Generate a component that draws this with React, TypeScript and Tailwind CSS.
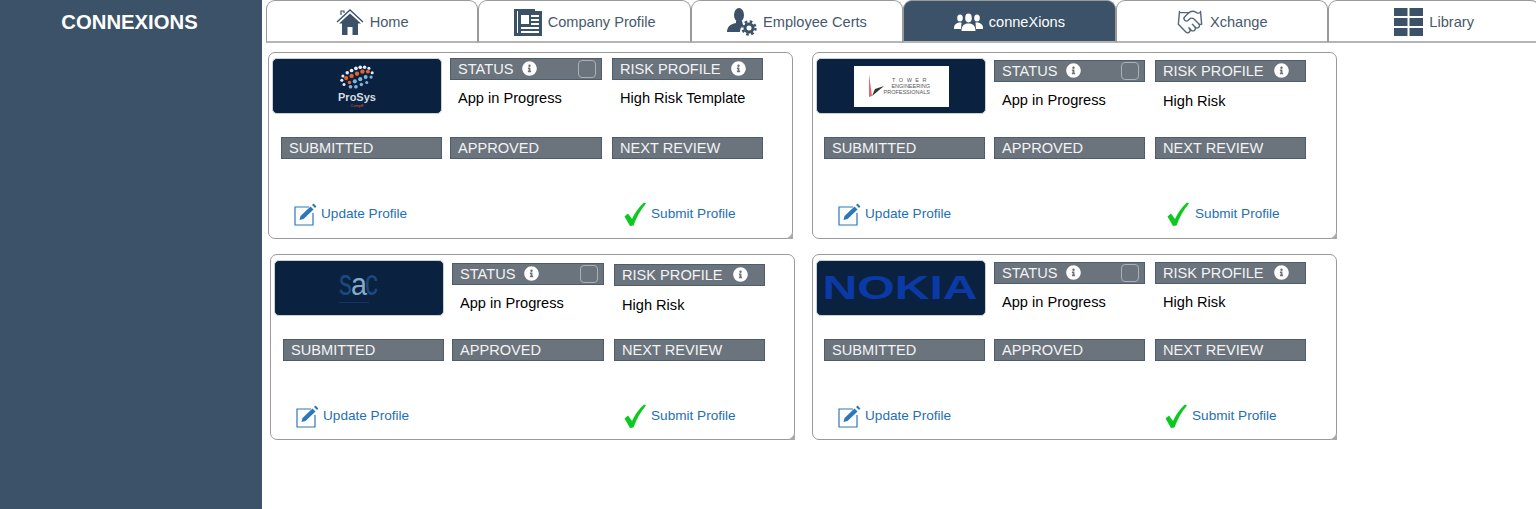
import type { ReactNode } from "react";
import { Handshake } from "lucide-react";
import { FaInfoCircle } from "react-icons/fa";

const FONT = "font-['Liberation_Sans',Arial,sans-serif]";

function HomeIcon() {
  return (
    <svg viewBox="0 0 28 28" className="h-[28px] w-[28px]">
      <path d="M1 14 L14 2 L27 14" fill="none" stroke="#3b5269" strokeWidth="1.3" />
      <path d="M5 7 V3 H8 V5" fill="none" stroke="#3b5269" strokeWidth="1.2" />
      <path
        d="M14 5.5 L3 15.5 H6 V27 H11.5 V19 H16.5 V27 H22 V15.5 H25 Z"
        fill="#3b5269"
      />
    </svg>
  );
}

function CompanyIcon() {
  return (
    <svg viewBox="0 0 28 28" className="h-[28px] w-[28px]">
      <path d="M0 1 H21 V3 H3 V25 H6 V28 H0 Z" fill="#3b5269" />
      <rect x="4" y="3" width="24" height="25" fill="#3b5269" />
      <rect x="7" y="7" width="8" height="9" fill="#fff" />
      <rect x="17" y="7" width="8" height="2" fill="#fff" />
      <rect x="17" y="11" width="8" height="2" fill="#fff" />
      <rect x="17" y="15" width="8" height="2" fill="#fff" />
      <rect x="7" y="19" width="18" height="2" fill="#fff" />
      <rect x="7" y="23" width="18" height="2" fill="#fff" />
    </svg>
  );
}

function CertsIcon() {
  return (
    <svg viewBox="0 0 30 28" className="h-[28px] w-[30px]" fill="#3b5269">
      <ellipse cx="12" cy="7" rx="5" ry="7" />
      <path d="M9 13 H15 L16 17 C14 19 13 21 13 24 H0 C0 19 3 16 9 15 Z" />
      <circle cx="22" cy="20" r="4" fill="none" stroke="#3b5269" strokeWidth="3" />
      <circle cx="22" cy="20" r="6.5" fill="none" stroke="#3b5269" strokeWidth="2.4" strokeDasharray="2.6 2.5" />
    </svg>
  );
}

function PeopleIcon() {
  return (
    <svg viewBox="0 0 29 18" className="h-[18px] w-[29px]" fill="#fff">
      <ellipse cx="6" cy="5" rx="2.8" ry="3.6" />
      <path d="M0 15 C0 11 3 10 5 9.5 L7.5 9.5 L7 16 H0 Z" />
      <ellipse cx="23" cy="5" rx="2.8" ry="3.6" />
      <path d="M29 15 C29 11 26 10 24 9.5 L21.5 9.5 L22 16 H29 Z" />
      <ellipse cx="14.5" cy="5" rx="3.3" ry="4.4" />
      <path d="M7.5 18 C7.5 13 10 11 13 10.5 H16 C19 11 21.5 13 21.5 18 Z" />
    </svg>
  );
}

function LibraryIcon() {
  return (
    <svg viewBox="0 0 29 28" className="h-[28px] w-[29px]" fill="#3b5269">
      <rect x="0" y="0" width="13.5" height="8" />
      <rect x="15.5" y="0" width="13.5" height="8" />
      <rect x="0" y="10" width="13.5" height="8" />
      <rect x="15.5" y="10" width="13.5" height="8" />
      <rect x="0" y="20" width="13.5" height="8" />
      <rect x="15.5" y="20" width="13.5" height="8" />
    </svg>
  );
}

function EditIcon() {
  return (
    <svg viewBox="0 0 23 23" className="h-[23px] w-[23px] shrink-0">
      <path d="M15 4 H1 V22 H19 V10" fill="none" stroke="#2b78b8" strokeWidth="1.2" />
      <path d="M6.5 13 L16.5 3.5 L19.5 6.5 L9.5 16 L5.5 17 Z" fill="#2b78b8" />
      <path d="M18 2 L19.6 0.6 L22.4 3.4 L21 5 Z" fill="#2b78b8" />
    </svg>
  );
}

function CheckIcon() {
  return (
    <svg viewBox="0 0 22 24" className="h-[24px] w-[22px] shrink-0">
      <path
        d="M0.5 14.5 L4 11.5 L8 17 C11 10.5 15 5 20 0.5 L22 1.5 C16.5 8 12.5 15 9.5 23.5 L6 24 Z"
        fill="#0dc91f"
      />
    </svg>
  );
}

function ProsysLogo() {
  const dots: [number, number, string, number][] = [
    [-13, 5, "#e8eef5", 1.4], [-9, 2, "#e8eef5", 1.6], [-5, 0, "#e8eef5", 1.7], [-1, -2, "#e8eef5", 1.7],
    [3, -3, "#e8eef5", 1.7], [7, -3, "#e8eef5", 1.6], [11, -2, "#e8eef5", 1.4],
    [-14, 9, "#e8eef5", 1.4], [-10, 7, "#e8622a", 1.9], [-5, 5, "#e8622a", 2], [0, 3, "#e8622a", 2],
    [5, 1, "#e8622a", 2], [10, 1, "#e8622a", 1.8], [14, 2, "#e8eef5", 1.4],
    [-12, 13, "#e8eef5", 1.4], [-7, 11, "#e8622a", 1.6], [-2, 10, "#7fb6dc", 1.9], [3, 8, "#7fb6dc", 1.9],
    [8, 6, "#7fb6dc", 1.8], [13, 6, "#7fb6dc", 1.5],
    [-6, 15, "#7fb6dc", 1.7], [-1, 15, "#7fb6dc", 1.7], [4, 13, "#7fb6dc", 1.6], [9, 11, "#7fb6dc", 1.4],
  ];
  return (
    <div className="flex flex-col items-center">
      <svg viewBox="-17 -6 34 24" className="h-[26px] w-[38px]">
        {dots.map(([cx, cy, fill, r], i) => (
          <circle key={i} cx={cx} cy={cy} r={r} fill={fill} />
        ))}
      </svg>
      <span className="mt-[1px] text-[11px] leading-[12px] font-bold text-[#d7dde4]">ProSys</span>
      <span className="text-[4px] leading-[5px] text-[#c9562b]">CompE</span>
    </div>
  );
}

function TowerLogo() {
  return (
    <div className="flex h-[41px] w-[95px] items-center bg-white pl-[12px]">
      <svg viewBox="0 0 18 26" className="h-[26px] w-[18px] shrink-0">
        <path d="M3 1 L6 23 L3 24 Z" fill="#e8656a" />
        <path d="M6 23 L18 13 L9 16 Z" fill="#333" />
      </svg>
      <div className="flex flex-col items-end text-[5.5px] leading-[6px] text-[#555]">
        <span className="tracking-[3.5px]">TOWER</span>
        <span>ENGINEERING</span>
        <span>PROFESSIONALS</span>
      </div>
    </div>
  );
}

function SacLogo() {
  const family = "'Liberation Sans',sans-serif";
  return (
    <svg viewBox="0 0 40 34" className="mr-[1px] h-[34px] w-[40px] overflow-visible">
      <text x="0" y="24" fontSize="36" fill="#1a4a80" textLength="13" lengthAdjust="spacingAndGlyphs" fontFamily={family}>
        s
      </text>
      <text x="26" y="24" fontSize="36" fill="#1a4a80" textLength="13" lengthAdjust="spacingAndGlyphs" fontFamily={family}>
        c
      </text>
      <text x="12" y="24" fontSize="31" fill="#86aac6" textLength="16" lengthAdjust="spacingAndGlyphs" fontFamily={family}>
        a
      </text>
      <rect x="0" y="31" width="30" height="1" fill="#1a4a80" opacity="0.5" />
    </svg>
  );
}

function NokiaLogo() {
  return (
    <svg viewBox="-2 -8 156 40" className="mr-[3px] h-[40px] w-[156px]">
      <text
        x="-1.5"
        y="23"
        fontSize="33"
        fontWeight="700"
        fill="#0b3aa6"
        textLength="155"
        lengthAdjust="spacingAndGlyphs"
        fontFamily="'Liberation Sans',sans-serif"
      >
        NOKIA
      </text>
    </svg>
  );
}

function Label({ text, info, check, className }: { text: string; info?: boolean; check?: boolean; className?: string }) {
  return (
    <div
      className={
        "relative flex h-[22px] items-center border border-[#4d5d6c] bg-[#6b747d] pl-[7px] text-[14.6px] text-[#f2f3f4] " +
        (className ?? "")
      }
    >
      <span className="mt-[2px]">{text}</span>
      {info && <FaInfoCircle className={"mb-[1px] h-[15px] w-[15px] text-white " + (check ? "ml-[9px]" : "ml-[10px]")} />}
      {check && (
        <span className="absolute top-[1px] right-[5px] h-[18px] w-[18px] rounded-[4px] border border-[#aab0b6]" />
      )}
    </div>
  );
}

function Tab({ icon, text, active }: { icon: ReactNode; text: string; active?: boolean }) {
  return (
    <div
      className={
        "flex h-[43px] w-[212.4px] shrink-0 items-center justify-center gap-[6px] rounded-t-[9px] border border-b-2 border-[#999] border-b-[#b5b5b5] pt-[1px] text-[14.6px] " +
        (active ? "bg-[#3b5269] text-white" : "bg-white text-[#46596d]")
      }
    >
      {icon}
      <span className="mt-[2px]">{text}</span>
    </div>
  );
}

type CardProps = {
  logo: ReactNode;
  riskText: string;
  outer: string;
  statusTop: string;
  riskTop: string;
  riskTextTop: string;
  narrow?: boolean;
  submitClass: string;
  cardHeight: string;
};

function Card({ logo, riskText, outer, statusTop, riskTop, riskTextTop, narrow, submitClass, cardHeight }: CardProps) {
  const statusW = narrow ? "w-[151px]" : "w-[152px]";
  return (
    <div className={"relative flex w-[525px] flex-col rounded-[7px] border border-[#9a9a9a] bg-white pt-[5px] " + cardHeight + " " + outer}>
      <div className="flex h-[55px] items-start">
        <div className="ml-[3px] flex h-[56px] w-[170px] shrink-0 items-center justify-center rounded-[5px] border border-[#c9d0d8] bg-[#0a2240]">
          {logo}
        </div>
        <div className={"ml-[8px] " + statusW + " " + statusTop}>
          <Label text="STATUS" info check />
          <p className="mt-[8px] pl-[8px] text-[14.6px] leading-[20px] text-black">App in Progress</p>
        </div>
        <div className={"ml-[10px] w-[151px] " + riskTop}>
          <Label text="RISK PROFILE" info />
          <p className={"pl-[8px] text-[14.6px] leading-[20px] text-black " + riskTextTop}>{riskText}</p>
        </div>
      </div>
      <div className="mt-[24px] flex">
        <Label text="SUBMITTED" className={narrow ? "ml-[11px] w-[161px]" : "ml-[12px] w-[161px]"} />
        <Label text="APPROVED" className={(narrow ? "ml-[9px] " : "ml-[8px] ") + statusW} />
        <Label text="NEXT REVIEW" className="ml-[10px] w-[151px]" />
      </div>
      <div className="mt-[43px] flex h-[24px] items-center text-[13.6px] text-[#1f6fb2]">
        <div className="ml-[25px] flex w-[304px] items-center gap-[4px]">
          <EditIcon />
          <span className="mt-[1px]">Update Profile</span>
        </div>
        <div className={"flex items-center " + submitClass}>
          <CheckIcon />
          <span className="mt-[1px]">Submit Profile</span>
        </div>
      </div>
      <svg viewBox="0 0 6 6" className="absolute right-[-1px] bottom-[-1px] h-[6px] w-[6px]">
        <path d="M6 0 V6 H0 Z" fill="#a8a8a8" />
      </svg>
    </div>
  );
}

export default function App() {
  return (
    <div className={"flex h-screen overflow-hidden bg-white " + FONT}>
      <aside className="w-[262px] shrink-0 bg-[#3b5269] pt-[10px] pr-[3px] text-center text-[20.3px] leading-[24px] font-bold text-white">
        CONNEXIONS
      </aside>
      <main className="min-w-0 flex-1">
        <nav className="ml-[4px] flex">
          <Tab icon={<HomeIcon />} text="Home" />
          <Tab icon={<CompanyIcon />} text="Company Profile" />
          <Tab icon={<CertsIcon />} text="Employee Certs" />
          <Tab active icon={<PeopleIcon />} text="conneXions" />
          <Tab icon={<Handshake size={28} strokeWidth={1.2} className="text-[#55677a]" />} text="Xchange" />
          <Tab icon={<LibraryIcon />} text="Library" />
        </nav>
        <div className="mt-[9px] flex flex-col gap-[15px]">
          <div className="flex">
            <Card
              logo={<ProsysLogo />}
              riskText="High Risk Template"
              outer="ml-[6px]"
              statusTop=""
              riskTop=""
              riskTextTop="mt-[8px]"
              cardHeight="h-[187px]"
              submitClass="ml-[26px] gap-[5px]"
            />
            <Card
              logo={<TowerLogo />}
              riskText="High Risk"
              outer="ml-[19px]"
              statusTop="mt-[2px]"
              riskTop="mt-[2px]"
              riskTextTop="mt-[9px]"
              narrow
              cardHeight="h-[187px]"
              submitClass="ml-[25px] gap-[6px]"
            />
          </div>
          <div className="flex">
            <Card
              logo={<SacLogo />}
              riskText="High Risk"
              outer="ml-[8px]"
              statusTop="mt-[3px]"
              riskTop="mt-[4px]"
              riskTextTop="mt-[9px]"
              cardHeight="h-[186px]"
              submitClass="ml-[24px] gap-[5px]"
            />
            <Card
              logo={<NokiaLogo />}
              riskText="High Risk"
              outer="ml-[17px]"
              statusTop="mt-[2px]"
              riskTop="mt-[2px]"
              riskTextTop="mt-[8px]"
              narrow
              cardHeight="h-[186px]"
              submitClass="ml-[23px] gap-[5px]"
            />
          </div>
        </div>
      </main>
    </div>
  );
}
